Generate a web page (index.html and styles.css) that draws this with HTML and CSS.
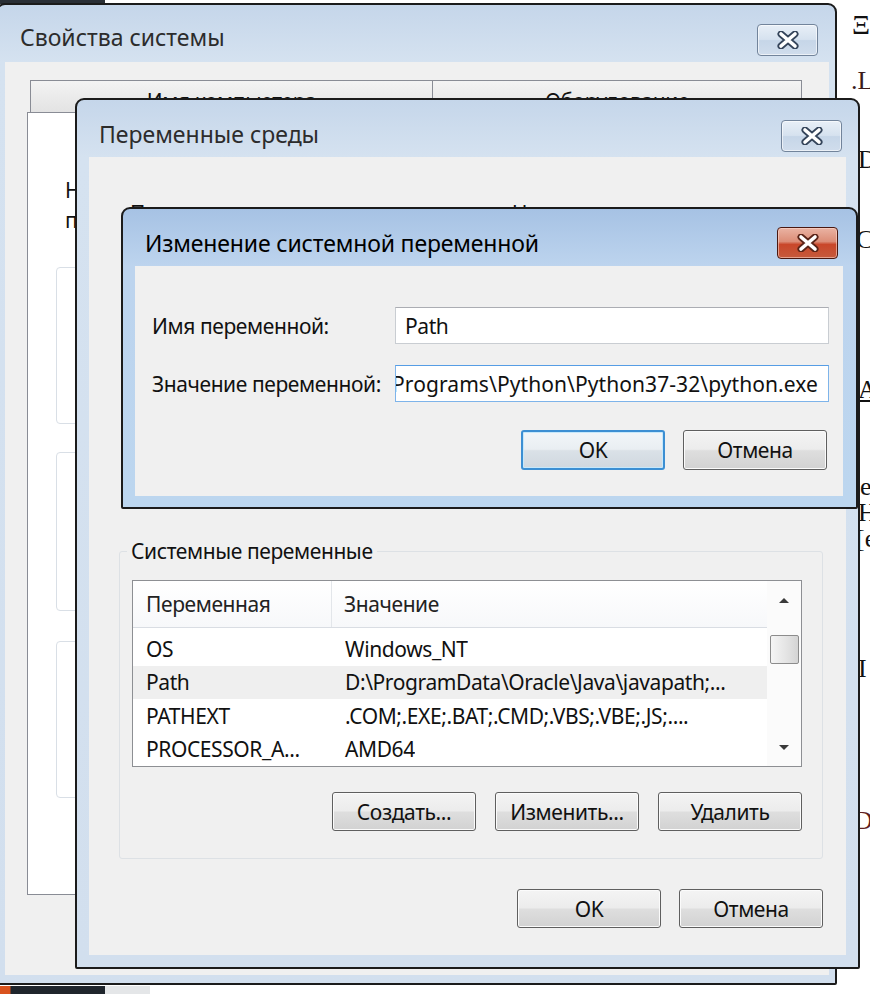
FILE: index.html
```html
<!DOCTYPE html>
<html lang="ru">
<head>
<meta charset="utf-8">
<title>Переменные среды</title>
<link rel="stylesheet" href="styles.css">
</head>
<body>
<div class="desktop">
  <div class="topstrip"></div>
  <div class="backpage">
    <span class="bp bp1">Ξ</span>
    <span class="bp bp2">.L/</span>
    <span class="bp bp3">D</span>
    <span class="bp bp4">C</span>
    <span class="bp bp5">A</span>
    <span class="bp bp6">e</span>
    <span class="bp bp7">H</span>
    <span class="bp bp8">[e</span>
    <span class="bp bp9">I</span>
    <span class="bp bp10">D</span>
  </div>
  <div class="taskbar"><span class="tb-start"></span><span class="tb-btn"></span></div>

  <section class="win win1">
    <header class="titlebar">
      <span class="title">Свойства системы</span>
      <span class="close"><svg viewBox="0 0 24 18" width="24" height="18"><path d="M5 3 L19 15 M19 3 L5 15" class="x-out"/><path d="M5 3 L19 15 M19 3 L5 15" class="x-in"/></svg></span>
    </header>
    <div class="client client1">
      <div class="tabs">
        <div class="tab tab-a">Имя компьютера</div>
        <div class="tab tab-b">Оборудование</div>
      </div>
      <div class="tabpanel">
        <p class="intro">Необходимо иметь права администратора для изменения<br>перечисленных параметров.</p>
        <div class="gbox gb1"></div>
        <div class="gbox gb2"></div>
        <div class="gbox gb3"></div>
      </div>
    </div>
  </section>

  <section class="win win2">
    <header class="titlebar">
      <span class="title">Переменные среды</span>
      <span class="close"><svg viewBox="0 0 24 18" width="24" height="18"><path d="M5 3 L19 15 M19 3 L5 15" class="x-out"/><path d="M5 3 L19 15 M19 3 L5 15" class="x-in"/></svg></span>
    </header>
    <div class="client client2">
      <div class="userlabel">Переменные среды пользователя для User</div>
      <div class="group">
        <span class="group-label">Системные переменные</span>
        <div class="listview">
          <div class="lv-main">
            <div class="lv-head">
              <span class="c1">Переменная</span>
              <span class="c2">Значение</span>
            </div>
            <div class="lv-rows">
              <div class="lv-row"><span class="c1">OS</span><span class="c2">Windows_NT</span></div>
              <div class="lv-row sel"><span class="c1">Path</span><span class="c2">D:\ProgramData\Oracle\Java\javapath;...</span></div>
              <div class="lv-row"><span class="c1">PATHEXT</span><span class="c2">.COM;.EXE;.BAT;.CMD;.VBS;.VBE;.JS;....</span></div>
              <div class="lv-row"><span class="c1">PROCESSOR_A...</span><span class="c2">AMD64</span></div>
            </div>
          </div>
          <div class="scrollbar">
            <svg class="arrow" viewBox="0 0 12 8" width="12" height="8"><path d="M1 7 L6 2 L11 7 Z"/></svg>
            <div class="thumb"></div>
            <div class="track"></div>
            <svg class="arrow" viewBox="0 0 12 8" width="12" height="8"><path d="M1 1 L6 6 L11 1 Z"/></svg>
          </div>
        </div>
        <div class="btnrow">
          <span class="btn">Создать...</span>
          <span class="btn">Изменить...</span>
          <span class="btn">Удалить</span>
        </div>
      </div>
      <div class="btnrow bottom">
        <span class="btn">OK</span>
        <span class="btn">Отмена</span>
      </div>
    </div>
  </section>

  <section class="win win3">
    <header class="titlebar">
      <span class="title">Изменение системной переменной</span>
      <span class="close red"><svg viewBox="0 0 24 18" width="24" height="18"><path d="M5 3 L19 15 M19 3 L5 15" class="x-out"/><path d="M5 3 L19 15 M19 3 L5 15" class="x-in"/></svg></span>
    </header>
    <div class="client client3">
      <div class="frow">
        <span class="flabel">Имя переменной:</span>
        <span class="field">Path</span>
      </div>
      <div class="frow">
        <span class="flabel">Значение переменной:</span>
        <span class="field focus"><span class="val">C:\Users\User\AppData\Local\Programs\Python\Python37-32\python.exe</span></span>
      </div>
      <div class="btnrow dlg">
        <span class="btn default">OK</span>
        <span class="btn">Отмена</span>
      </div>
    </div>
  </section>
</div>
</body>
</html>
```

FILE: styles.css
```css
html, body {
  margin: 0;
  padding: 0;
}
body {
  width: 870px;
  height: 994px;
  overflow: hidden;
  background: #ffffff;
  font-family: "Noto Sans", "Open Sans", "DejaVu Sans", sans-serif;
  color: #111;
}
.desktop {
  position: relative;
  width: 870px;
  height: 994px;
  overflow: hidden;
  background: #ffffff;
}

/* background page fragments */
.topstrip {
  position: absolute;
  left: 0;
  top: 0;
  width: 105px;
  height: 4px;
  background: #2a2f36;
}
.backpage {
  position: absolute;
  left: 838px;
  top: 0;
  width: 32px;
  height: 994px;
  font-family: "Liberation Serif", "DejaVu Serif", serif;
  font-size: 26px;
  color: #111;
}
.bp { position: absolute; line-height: 26px; }
.bp1 { left: 14px; top: 12px; font-size: 28px; }
.bp2 { left: 13px; top: 68px; color: #3a1a1a; }
.bp3 { left: 20px; top: 147px; }
.bp4 { left: 18px; top: 227px; }
.bp5 { left: 20px; top: 377px; text-decoration: underline; }
.bp6 { left: 22px; top: 474px; }
.bp7 { left: 20px; top: 500px; }
.bp8 { left: 18px; top: 526px; }
.bp9 { left: 20px; top: 656px; }
.bp10 { left: 16px; top: 808px; color: #602020; }
.taskbar {
  position: absolute;
  left: 0;
  top: 986px;
  width: 150px;
  height: 8px;
  display: flex;
}
.tb-start {
  width: 105px;
  background: linear-gradient(90deg, #d9531e 0, #d9531e 10px, #1f252c 11px, #1f252c 100%);
}
.tb-btn {
  width: 45px;
  background: #e4e6e8;
}

/* windows */
.win {
  position: absolute;
  box-sizing: border-box;
  border: 2px solid #1b1b1b;
  border-radius: 9px 9px 2px 2px;
  display: flex;
  flex-direction: column;
  background: linear-gradient(180deg, #c5d6ea 0, #d5e2f0 57px, #d2dfee 100%);
}
.win1 { left: -4px; top: 3px; width: 841px; height: 982px; }
.win2 { left: 75px; top: 98px; width: 785px; height: 871px; }
.win3 {
  left: 121px;
  top: 207px;
  width: 737px;
  height: 302px;
  background: linear-gradient(180deg, #a6c2e4 0, #bdd4ee 57px, #bcd6ef 100%);
}

.titlebar {
  height: 57px;
  flex: none;
  display: flex;
  align-items: flex-start;
  justify-content: space-between;
}
.title {
  margin: 19px 0 0 22px;
  font-size: 23px;
  line-height: 30px;
  color: #2c2c2c;
  white-space: nowrap;
}
.win1 .title { margin-top: 17px; }
.win3 .title { color: #000; letter-spacing: -0.15px; }
.close {
  width: 61px;
  height: 32px;
  box-sizing: border-box;
  border: 1px solid #72849b;
  border-radius: 4px;
  background: linear-gradient(180deg, #e8eff7 0, #d6e2ef 48%, #c6d6e8 52%, #d0ddec 100%);
  box-shadow: inset 0 0 0 1px rgba(255,255,255,0.6);
  display: flex;
  align-items: center;
  justify-content: center;
}
.win1 .close { margin: 19px 17px 0 0; }
.win2 .close { margin: 20px 16px 0 0; }
.win3 .close { margin: 18px 18px 0 0; }
.close.red {
  border-color: #4a1810;
  background: linear-gradient(180deg, #eab3a3 0, #dc8d77 45%, #c9472a 55%, #c65a3c 100%);
  box-shadow: inset 0 0 0 1px rgba(255,220,210,0.55);
}
.x-out { fill: none; stroke: #34445a; stroke-width: 7; stroke-linecap: round; }
.x-in { fill: none; stroke: #ffffff; stroke-width: 3.6; stroke-linecap: round; }
.red .x-out { stroke: #5a2418; }

.client {
  background: #f0f0f0;
  flex: 1;
  display: flex;
  flex-direction: column;
  min-height: 0;
  font-size: 21px;
  letter-spacing: -0.4px;
}

/* window 1 */
.client1 {
  margin: 0 6px 8px 7px;
  padding: 18px 0 0 22px;
}
.tabs {
  display: flex;
  margin-left: 3px;
  height: 32px;
}
.tab {
  box-sizing: border-box;
  height: 32px;
  border: 1px solid #898c95;
  border-bottom: none;
  background: linear-gradient(180deg, #f3f3f3, #e3e3e3);
  line-height: 40px;
  text-align: center;
  color: #111;
  overflow: hidden;
}
.tab-a { width: 403px; }
.tab-b { width: 369px; border-left: none; }
.tabpanel {
  box-sizing: border-box;
  width: 778px;
  height: 783px;
  border: 1px solid #898c95;
  background: #ffffff;
  padding: 62px 0 0 37px;
}
.intro {
  margin: 0;
  line-height: 30px;
  white-space: nowrap;
}
.gbox {
  width: 700px;
  border: 1px solid #d9dfe6;
  border-radius: 4px;
  margin-left: -9px;
}
.gb1 { height: 155px; margin-top: 32px; }
.gb2 { height: 157px; margin-top: 28px; }
.gb3 { height: 155px; margin-top: 30px; }

/* window 2 */
.client2 {
  margin: 0 12px 12px 12px;
}
.userlabel {
  margin: 42px 0 0 41px;
  line-height: 28px;
  white-space: nowrap;
}
.group {
  margin: 324px 23px 0 30px;
  height: 308px;
  box-sizing: border-box;
  border: 1px solid #dde1e5;
  border-radius: 3px;
  padding: 0 20px 0 12px;
  display: flex;
  flex-direction: column;
}
.group-label {
  align-self: flex-start;
  margin: -15px 0 0 -5px;
  padding: 0 4px;
  background: #f0f0f0;
  line-height: 28px;
  white-space: nowrap;
}
.listview {
  margin-top: 15px;
  width: 670px;
  height: 187px;
  box-sizing: border-box;
  border: 1px solid #8d8f93;
  background: #ffffff;
  display: flex;
}
.lv-main {
  flex: 1;
  display: flex;
  flex-direction: column;
}
.lv-head {
  height: 47px;
  box-sizing: border-box;
  border-bottom: 1px solid #d9dde3;
  display: flex;
  align-items: center;
  background: linear-gradient(180deg, #ffffff, #f7f8fa);
  color: #222;
}
.lv-head .c1 {
  height: 100%;
  display: flex;
  align-items: center;
  border-right: 1px solid #e3e6ea;
}
.c1 {
  width: 199px;
  padding-left: 13px;
  box-sizing: border-box;
  flex: none;
  white-space: nowrap;
  overflow: hidden;
}
.c2 {
  padding-left: 12px;
  white-space: nowrap;
  overflow: hidden;
}
.lv-rows {
  padding-top: 4px;
}
.lv-row {
  height: 33.5px;
  display: flex;
  align-items: center;
  line-height: 30px;
}
.lv-row .c1 { width: 200px; }
.lv-row.sel { background: #efefef; }
.scrollbar {
  width: 34px;
  flex: none;
  display: flex;
  flex-direction: column;
  align-items: center;
  background: #fbfbfb;
  padding: 15px 0 14px;
  box-sizing: border-box;
}
.arrow { fill: #3a3a3a; flex: none; }
.thumb {
  margin-top: 31px;
  width: 29px;
  height: 29px;
  box-sizing: border-box;
  border: 1px solid #8c8c8c;
  border-radius: 2px;
  background: linear-gradient(90deg, #f5f5f5, #e3e3e3 60%, #d4d4d4);
  flex: none;
}
.track { flex: 1; }

.btnrow {
  display: flex;
  justify-content: flex-end;
  gap: 19px;
}
.group .btnrow { margin-top: 25px; }
.btnrow.bottom { margin: 30px 23px 0 0; gap: 18px; }
.btn {
  width: 144px;
  height: 39px;
  box-sizing: border-box;
  border: 1px solid #5f5f5f;
  border-radius: 3px;
  background: linear-gradient(180deg, #f4f4f4 0, #ececec 48%, #dedede 52%, #d2d2d2 100%);
  box-shadow: inset 0 0 0 1px #fbfbfb;
  display: flex;
  align-items: center;
  justify-content: center;
  color: #111;
  white-space: nowrap;
}

/* window 3 */
.client3 {
  margin: 0 13px 11px 12px;
  padding-top: 41px;
}
.frow {
  display: flex;
  align-items: center;
  height: 37px;
}
.frow + .frow { margin-top: 21px; }
.flabel {
  width: 260px;
  box-sizing: border-box;
  padding-left: 17px;
  white-space: nowrap;
}
.field {
  width: 434px;
  height: 37px;
  box-sizing: border-box;
  border: 1px solid #c9cdd2;
  border-top-color: #abadb3;
  background: #ffffff;
  padding: 0 10px 0 9px;
  display: flex;
  align-items: center;
  overflow: hidden;
  white-space: nowrap;
}
.field.focus {
  border-color: #7eb4ea;
  border-top-color: #569de5;
  justify-content: flex-end;
  padding-left: 0;
}
.val { flex: none; letter-spacing: 0.08px; }
.btnrow.dlg {
  margin: 28px 16px 0 0;
  gap: 18px;
}
.btnrow.dlg .btn { height: 40px; }
.btn.default {
  border: 2px solid #3c8fd3;
  box-shadow: inset 0 0 0 1px #c6e8fb;
  background: linear-gradient(180deg, #f2f6f9 0, #e9eef2 48%, #dae1e7 52%, #d0d8df 100%);
}
```
